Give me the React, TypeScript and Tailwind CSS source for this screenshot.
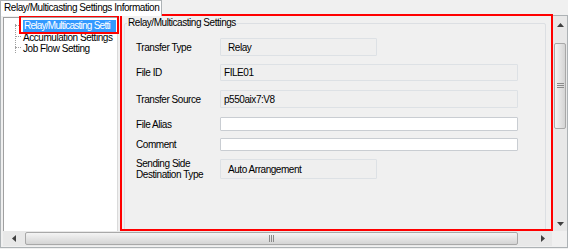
import React from 'react';

const font = "font-['Liberation_Sans',Arial,sans-serif] text-[10px] tracking-[-0.45px] text-black";

function Field({ label, value, width, white, top, height, pl }: { label: React.ReactNode; value?: string; width: string; white?: boolean; top: string; height: string; pl: string }) {
  return (
    <div className={`flex items-center ${top}`}>
      <div className="w-[95px] pl-[11px] leading-[11px]">{label}</div>
      <div
        className={`${width} ${height} ${pl} flex items-center border rounded-[1px] ${
          white ? 'bg-white border-[#c9cdd2]' : 'bg-[#efefef] border-[#dde1e5]'
        }`}
      >
        {value}
      </div>
    </div>
  );
}

export default function App() {
  return (
    <div className={`w-[568px] h-[249px] bg-[#f0f0f0] relative overflow-hidden ${font}`}>
      {/* tab header */}
      <div className="h-[15px] flex">
        <div className="w-[162px] h-[16px] bg-white border border-b-0 border-[#adb2b5] pl-[3px] leading-[14px] relative z-10">
          Relay/Multicasting Settings Information
        </div>
      </div>

      {/* tab page */}
      <div className="h-[233px] border border-[#adb2b5] bg-[#f0f0f0] flex flex-col pl-[2px]">
        <div className="flex h-[215px]">
          {/* tree */}
          <div className="w-[115px] mt-[1px] bg-white border-l border-t border-[#a0a0a0] border-r-[#dadada] border-r relative">
            <div className="absolute left-[11px] top-[6px] h-[29px] border-l border-dotted border-[#a0a0a0]" />
            <div className="absolute left-[11px] top-[7px] w-[6px] border-t border-dotted border-[#a0a0a0]" />
            <div className="absolute left-[11px] top-[18px] w-[6px] border-t border-dotted border-[#a0a0a0]" />
            <div className="absolute left-[11px] top-[29px] w-[6px] border-t border-dotted border-[#a0a0a0]" />
            <div className="pt-[2px] pl-[19px] flex flex-col items-start">
              <div className="bg-[#3399ff] text-white h-[12px] leading-[12px] pl-[1px] w-[93px] overflow-hidden whitespace-nowrap tracking-[-0.75px]">
                Relay/Multicasting Setti
              </div>
              <div className="h-[11px] leading-[11px]">Accumulation Settings</div>
              <div className="h-[11px] leading-[11px]">Job Flow Setting</div>
            </div>
          </div>

          {/* right panel */}
          <div className="flex-1 bg-[#f0f0f0] overflow-hidden pl-[6px] pt-[1px]">
            <div className="relative w-[422px] h-[260px] mt-[6px] border border-[#dcdfe3] rounded-[2px]">
              <div className="absolute -top-[7px] left-[2px] bg-[#f0f0f0] px-[1px] leading-[12px]">
                Relay/Multicasting Settings
              </div>
              <div className="pt-[14px]">
                <Field label="Transfer Type" value="Relay" width="w-[157px]" height="h-[18px]" pl="pl-[7px]" top="" />
                <Field label="File ID" value="FILE01" width="w-[298px]" height="h-[17px]" pl="pl-[3px]" top="mt-[8px]" />
                <Field label="Transfer Source" value="p550aix7:V8" width="w-[298px]" height="h-[18px]" pl="pl-[3px]" top="mt-[9px]" />
                <Field label="File Alias" width="w-[298px]" height="h-[14px]" pl="" white top="mt-[9px]" />
                <Field label="Comment" width="w-[298px]" height="h-[13px]" pl="" white top="mt-[7px]" />
                <Field
                  label={<>Sending Side<br />Destination Type</>}
                  value="Auto Arrangement"
                  width="w-[157px]"
                  height="h-[20px]"
                  pl="pl-[7px]"
                  top="mt-[7px]"
                />
              </div>
            </div>
          </div>

          {/* vertical scrollbar */}
          <div className="w-[15px] bg-[#e8e8e8] flex flex-col border-l border-[#e0e0e0]">
            <div className="h-[17px] flex items-center justify-center">
              <svg width="7" height="4" viewBox="0 0 7 4"><path d="M0 4 L3.5 0 L7 4 Z" fill="#404040" /></svg>
            </div>
            <div className="h-[10px]" />
            <div className="mx-[1px] h-[86px] rounded-[2px] border border-[#a8a8a8] bg-gradient-to-r from-[#f4f4f4] to-[#d4d4d4] flex items-center justify-center">
              <svg width="7" height="6" viewBox="0 0 7 6">
                <path d="M0 0.5 H7 M0 2.5 H7 M0 4.5 H7" stroke="#8a8a8a" strokeWidth="1" />
              </svg>
            </div>
            <div className="flex-1" />
            <div className="h-[15px] flex items-center justify-center">
              <svg width="7" height="4" viewBox="0 0 7 4"><path d="M0 0 L3.5 4 L7 0 Z" fill="#404040" /></svg>
            </div>
          </div>
        </div>

        {/* horizontal scrollbar */}
        <div className="flex h-[15px]">
          <div className="w-[549px] bg-[#e8e8e8] flex items-center">
            <div className="w-[22px] flex items-center justify-center">
              <svg width="4" height="7" viewBox="0 0 4 7"><path d="M4 0 L0 3.5 L4 7 Z" fill="#404040" /></svg>
            </div>
            <div className="w-[493px] h-[13px] rounded-[2px] border border-[#a8a8a8] bg-gradient-to-b from-[#f4f4f4] to-[#d4d4d4] flex items-center justify-center">
              <svg width="6" height="7" viewBox="0 0 6 7">
                <path d="M0.5 0 V7 M2.5 0 V7 M4.5 0 V7" stroke="#8a8a8a" strokeWidth="1" />
              </svg>
            </div>
            <div className="flex-1 flex items-center justify-end pr-[7px]">
              <svg width="4" height="7" viewBox="0 0 4 7"><path d="M0 0 L4 3.5 L0 7 Z" fill="#404040" /></svg>
            </div>
          </div>
          <div className="flex-1 bg-[#f0f0f0]" />
        </div>
      </div>

      {/* red annotation frames */}
      <div className="absolute left-[19px] top-[15px] w-[100px] h-[19px] border-2 border-[#ff0000] pointer-events-none" />
      <div className="absolute left-[120px] top-[14px] w-[433px] h-[217px] border-2 border-[#ff0000] pointer-events-none" />
    </div>
  );
}
